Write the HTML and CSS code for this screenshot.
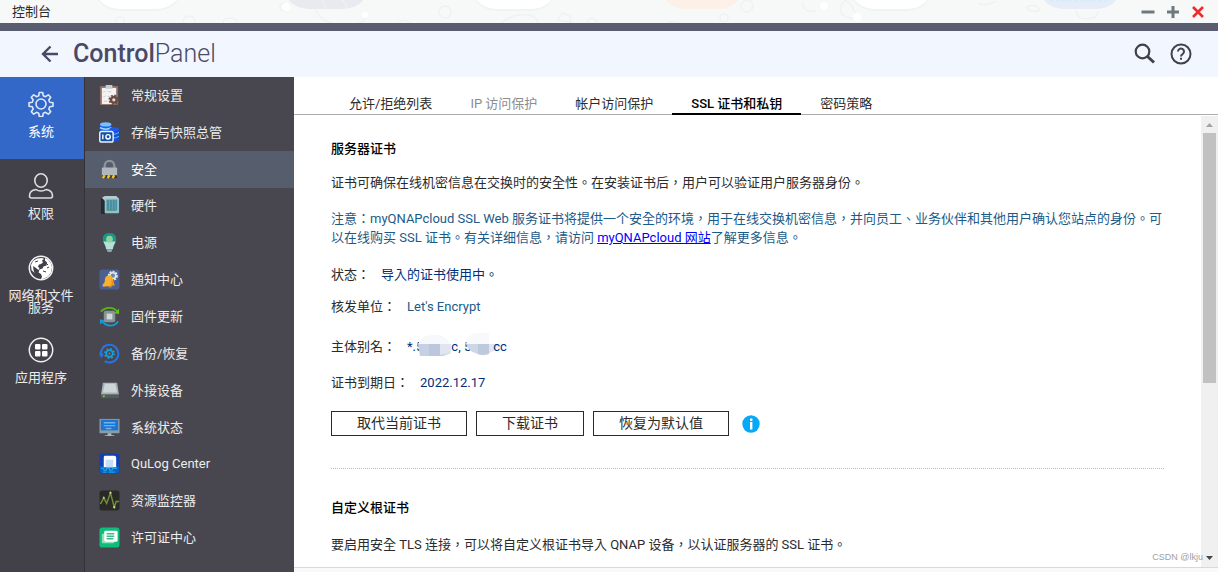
FILE: index.html
```
<!DOCTYPE html>
<html lang="zh-TW">
<head>
<meta charset="utf-8">
<title>控制台</title>
<link rel="stylesheet" href="styles.css">
</head>
<body>
<header class="titlebar">
  <svg class="wallpaper" width="1218" height="23" viewBox="0 0 1218 23" aria-hidden="true">
    <g fill="none" stroke="#f0f2f1" stroke-width="1.5">
      <path d="M24 12q6 10 17 3"/><circle cx="120" cy="21" r="4"/><circle cx="189" cy="22" r="6"/><ellipse cx="230" cy="22" rx="7" ry="4"/><circle cx="284" cy="7" r="4"/>
      <path d="M315 9q6 14 22 15q25 2 29-6M398 27q2-12 14-3M500 24q14-12 28-9q10 1 10 10M666 24q2-4 14-1"/>
      <circle cx="445" cy="12" r="6"/><path d="M558 20l4-7 8 3 1 6z"/><circle cx="592" cy="22" r="4"/><circle cx="747" cy="6" r="6"/><path d="M802 3q2 10 14 8M841 5q4-8 10 0l8 13q-12 2-18-5z"/>
      <path d="M978 3q8 4 18-2M1026 7q10-4 14 3-8 4-14-3M1076 10q0 8 10 9 12 0 12-8M1170 20q4-5 9 1"/><circle cx="724" cy="18" r="4"/>
    </g>
    <g fill="#f1f3f2">
      <rect x="96" y="-28" width="84" height="39" rx="24"/><rect x="473" y="-28" width="82" height="39" rx="24"/><rect x="851" y="-28" width="80" height="39" rx="24"/>
    </g>
    <g fill="#fff">
      <rect x="96" y="-30" width="84" height="39" rx="24"/><rect x="473" y="-30" width="82" height="39" rx="24"/><rect x="851" y="-30" width="80" height="39" rx="24"/>
      <circle cx="365" cy="15" r="3"/><circle cx="286" cy="7" r="4"/><circle cx="824" cy="6" r="4"/><circle cx="857" cy="17" r="4"/>
    </g>
    <rect x="285" y="-30" width="82" height="39" rx="24" fill="#e9eaef"/>
    <path d="M322 0q4 6 3 9M342 0q6 5 4 9" stroke="#f4f5f8" fill="none"/>
    <rect x="662" y="-30" width="80" height="39" rx="24" fill="#fdf0e6"/>
    <rect x="1040" y="-30" width="80" height="39" rx="24" fill="#e6edf8"/>
    <path d="M1050 1h58" stroke="#d2effb" stroke-width="2" stroke-dasharray="4 2"/>
  </svg>
  <h1 class="window-title">控制台</h1>
  <div class="window-controls">
    <button class="icon-button" aria-label="最小化"><svg width="14" height="14" viewBox="0 0 14 14"><path d="M.5 7h13" stroke="#70787f" stroke-width="3"/></svg></button>
    <button class="icon-button" aria-label="最大化"><svg width="14" height="14" viewBox="0 0 14 14"><path d="M1 7h12M7 1v12" stroke="#70787f" stroke-width="3"/></svg></button>
    <button class="icon-button" aria-label="关闭"><svg width="14" height="14" viewBox="0 0 14 14"><path d="M2 2l10 10M12 2L2 12" stroke="#ef2b2d" stroke-width="2.6"/></svg></button>
  </div>
</header>
<div class="app-header">
  <button class="icon-button" aria-label="返回"><svg width="18" height="18" viewBox="0 0 18 18" fill="none" stroke="#4a4a66" stroke-width="2.400"><path d="M17 9H2.500M9.500 1.500L2 9l7.500 7.500"/></svg></button>
  <h2 class="app-name"><b>Control</b><span>Panel</span></h2>
  <div class="header-tools">
    <button class="icon-button" aria-label="搜索"><svg width="22" height="22" viewBox="0 0 22 22" fill="none" stroke="#41414d"><circle cx="8.500" cy="8.500" r="6.800" stroke-width="2.200"/><path d="M13.500 13.500l6.500 6" stroke-width="3"/></svg></button>
    <button class="icon-button" aria-label="帮助"><svg width="22" height="22" viewBox="0 0 22 22" fill="none" stroke="#41414d" stroke-width="2"><circle cx="11" cy="11" r="9.500"/><path d="M8 8.600a3 3 0 1 1 4.700 2.400C11.500 11.900 11 12.300 11 13.500M11 14.800v2"/></svg></button>
  </div>
</div>
<div class="workspace">
  <nav class="rail">
    <a class="rail-item active" href="#system">
      <svg width="26" height="26" viewBox="0 0 26 26" fill="none" stroke="#dfe8f8" stroke-width="1.600" stroke-linejoin="round"><path d="M11.300 1.500h3.400l.6 3.300 2.200.9 2.800-1.900 2.400 2.400-1.900 2.800.9 2.200 3.300.6v3.400l-3.300.6-.9 2.200 1.900 2.800-2.400 2.400-2.800-1.900-2.200.9-.6 3.300h-3.400l-.6-3.300-2.200-.9-2.800 1.900-2.400-2.400 1.900-2.800-.9-2.200-3.300-.6v-3.400l3.300-.6.9-2.200-1.900-2.800 2.400-2.400 2.800 1.900 2.200-.9z"/><circle cx="13" cy="13" r="5"/></svg>
      <span>系统</span></a>
    <a class="rail-item" href="#privilege">
      <svg width="26" height="26" viewBox="0 0 26 26" fill="none" stroke="#ddd" stroke-width="1.600"><ellipse cx="13" cy="7.500" rx="6.200" ry="6.700"/><path d="M8 16.500C4 17 1.500 19.500 1.500 23q0 2 2 2h19q2 0 2-2c0-3.500-2.500-6-6.500-6.500-2.500 2-7.500 2-10 0z"/></svg>
      <span>权限</span></a>
    <a class="rail-item" href="#network">
      <svg width="26" height="26" viewBox="0 0 26 26"><circle cx="13" cy="13" r="11.700" fill="none" stroke="#f2f2f2" stroke-width="1.500"/><path fill="#fff" d="M5 6l4-2.500 5-.5 2 1-2 1.500 1 2-2 1.500-2 .5-1 2 1.500 2-1 1.500-2.500-2L5 11l.5 4 1 3-3-3L3 10zM17 3l3 1.500 3 4 1 4-1 5-3 4-4 2-3 1 1-3-1-2.500-2.500-1.500 1-3 3-1 1-2 3-1 .5-3-2-2z"/><path d="M7 7l3-1M18 8l2 2M15 16l3 1M19 13l2-1" stroke="#42414a" fill="none"/></svg>
      <span>网络和文件服务</span></a>
    <a class="rail-item" href="#apps">
      <svg width="26" height="26" viewBox="0 0 26 26" fill="#fff"><circle cx="13" cy="13" r="11.700" fill="none" stroke="#eee" stroke-width="1.500"/><rect x="7" y="7" width="5.500" height="5.500" rx="1"/><rect x="14" y="7" width="5.500" height="5.500" rx="1"/><rect x="7" y="14" width="5.500" height="5.500" rx="1"/><rect x="14" y="14" width="5.500" height="5.500" rx="1"/></svg>
      <span>应用程序</span></a>
  </nav>
  <nav class="submenu">
    <div class="submenu-list">
    <a class="menu-item" href="#general"><svg viewBox="0 0 22 22"><rect x="1" y="1" width="19" height="20" rx="1" fill="#8e6f66"/><path fill="#f4f3f1" d="M3 3h15v17H3z"/><path fill="#c5ced3" d="M7 0h7v4H7z"/><path d="M4 7l1 1 2-2M4 12l1 1 2-2M9 7h4M9 12h3M5 17h4" stroke="#ccc" fill="none"/><circle cx="15.500" cy="15.500" r="3" fill="#dedede" stroke="#6a4a42" stroke-width="2.600"/><circle cx="15.500" cy="15.500" r="4.800" fill="none" stroke="#6a4a42" stroke-width="1.500" stroke-dasharray="2 1.770"/></svg>常规设置</a>
    <a class="menu-item" href="#storage"><svg viewBox="0 0 22 22"><path fill="#1c63ea" d="M1 2h12v10H1z"/><ellipse cx="7" cy="2.500" rx="6" ry="2.300" fill="#79c0fb"/><path d="M1 6q6 3 12 0" stroke="#a6dbff" stroke-width="1.500" fill="none"/><path fill="#1552d4" d="M11 8h10v11q-5 3-10 0z"/><ellipse cx="16" cy="7.500" rx="5" ry="2" fill="#2458e0"/><path d="M12 12q5 2 9-1M13 16q4 2 8-1" stroke="#6fb4fa" fill="none"/><rect x=".8" y="10" width="14" height="11" rx="2" fill="#1451a5" stroke="#eaf4ff" stroke-width="1.500"/><circle cx="9.500" cy="15.500" r="2.300" fill="none" stroke="#fff" stroke-width="1.500"/><path d="M4 13v5" stroke="#fff" stroke-width="1.500"/></svg>存储与快照总管</a>
    <a class="menu-item selected" href="#security" aria-current="page"><svg viewBox="0 0 22 22"><path d="M6 11V7a5 5 0 0 1 10 0v4" fill="none" stroke="#8b9298" stroke-width="2.500"/><rect x="3" y="9" width="16" height="11" rx="1" fill="#b0b7bd"/><path fill="#333" d="M3 17h16v3H3z"/><path d="M4 20l2-3M9 20l2-3M14 20l2-3" stroke="#f8c51e" stroke-width="2.500"/></svg>安全</a>
    <a class="menu-item" href="#hardware"><svg viewBox="0 0 22 22"><path fill="#252b2e" d="M2 4l4-3v19H2z"/><path fill="#b8cbd0" d="M3 3l3-2h12l3 3v2H6z"/><rect x="6" y="4" width="15" height="15" rx="1" fill="#8cc3d0"/><path fill="#4a8ea2" d="M8 5h11v11H8z"/><path d="M11 5v11M14 5v11M17 5v11" stroke="#66a4b4"/><path d="M8 16h10" stroke="#5d8f62"/></svg>硬件</a>
    <a class="menu-item" href="#power"><svg viewBox="0 0 22 22"><path fill="#159a88" d="M11 1c-5 0-7 3-7 6 0 4 3 5 3.500 10h7C15 12 18 11 18 7c0-3-2-6-7-6z"/><path fill="#b4dfda" d="M4.500 10h13c-1 3-2.500 4-3 8h-7C7 14 5.500 13 4.500 10z"/><circle cx="11" cy="7.500" r="3.500" fill="#8fd29b"/><path fill="#9ca2a4" d="M8 18h6l-1 3H9z"/></svg>电源</a>
    <a class="menu-item" href="#notification"><svg viewBox="0 0 22 22"><rect x=".5" y=".5" width="21" height="21" rx="3" fill="#4b6090"/><circle cx="14.500" cy="7" r="4" fill="none" stroke="#e1e7ef" stroke-width="2.500" stroke-dasharray="2 1"/><circle cx="14.500" cy="7" r="3" fill="#7286a4" stroke="#e1e7ef" stroke-width="1.500"/><path fill="#fbb02d" d="M8 7.500Q11 5 14 8.500l1.500 6 1 2.500-12 1.500-1-1.500 2.500-3.500.3-3.500Q6.500 8 8 7.500z"/><path fill="#f08d19" d="M9 18h5q-2 3-5 0zM13 10l3 6.500-3 .5z"/></svg>通知中心</a>
    <a class="menu-item" href="#firmware"><svg viewBox="0 0 22 22"><path d="M2 6Q6 1.500 12 2q5 .5 8 5" fill="none" stroke="#55b90a" stroke-width="2"/><path fill="#66c60e" d="M16 7.500l5 1V3z"/><path d="M20 16q-3 5-9 4.500-5-.5-8-5" fill="none" stroke="#159bd9" stroke-width="2"/><path fill="#159bd9" d="M6 15l-5-1v5.500z"/><rect x="5" y="5" width="12" height="12" rx="2" fill="#879498"/><rect x="8" y="8" width="6" height="6" fill="#d0d9dc"/></svg>固件更新</a>
    <a class="menu-item" href="#backup"><svg viewBox="0 0 22 22" fill="none"><path d="M5 4A9.300 9.300 0 1 1 6 19" stroke="#2674e8" stroke-width="2.200"/><path d="M2 14Q1 8 6 3" stroke="#2674e8" stroke-width="2.200"/><path fill="#2674e8" d="M0 11h5l-2 5z"/><circle cx="11" cy="11" r="3.500" stroke="#16a0df" stroke-width="1.800"/><circle cx="11" cy="11" r="5" stroke="#16a0df" stroke-width="1.500" stroke-dasharray="2 1.920"/><circle cx="11" cy="11" r="1" fill="#16a0df"/></svg>备份/恢复</a>
    <a class="menu-item" href="#external"><svg viewBox="0 0 22 22"><path fill="#a7b0b5" d="M4 3h15l2 13H2z"/><path fill="#cdd5d8" d="M6 4h11l2 9H4z"/><path fill="#555c5e" d="M2 15h19v4H2z"/><path fill="#79c82a" d="M4 16h2v2H4z"/></svg>外接设备</a>
    <a class="menu-item" href="#status"><svg viewBox="0 0 22 22"><rect x=".5" y="2" width="21" height="15" fill="#879da9"/><path fill="#1c75d2" d="M2 3h18v11H2z"/><path d="M5 6h12M5 9h12M7 12h6" stroke="#6fb1f0" stroke-width="1.500"/><path fill="#aab7be" d="M9 17h4v2h3v1H6v-1h3z"/></svg>系统状态</a>
    <a class="menu-item" href="#qulog"><svg viewBox="0 0 22 22"><rect x=".5" y=".5" width="21" height="21" rx="3" fill="#123fb4"/><path fill="#0a5fc4" d="M1 14h20v5q0 2-2 2H3q-2 0-2-2z"/><path fill="#fff" d="M6 3h10q2 0 2 2v10H5V5q0-2 1-2z"/><path fill="#c6ddf7" d="M7 7h8v8H7z"/><path d="M2 16h3v2h3v-2h3v2h3v-2h5M4 20h4M10 20h7" stroke="#22b5ea" fill="none"/></svg>QuLog Center</a>
    <a class="menu-item" href="#resource"><svg viewBox="0 0 22 22"><rect x=".5" y=".5" width="21" height="21" rx="3" fill="#2b2927"/><path d="M1 14h1l3-6 3 6 4-11 4 15 2-6h3" fill="none" stroke="#718f38" stroke-width="1.500"/><g fill="#c7dc92"><circle cx="5" cy="8" r="1"/><circle cx="12" cy="3" r="1.200"/><circle cx="16" cy="18" r="1.200"/></g></svg>资源监控器</a>
    <a class="menu-item" href="#license"><svg viewBox="0 0 22 22"><rect x=".5" y=".5" width="21" height="21" rx="3" fill="#0dbd78"/><rect x="3" y="7" width="13" height="10" rx="1" fill="#8be0bd"/><rect x="5.500" y="4" width="14" height="11.500" rx="1.500" fill="#fff"/><path d="M8 7h8M8 9.700h8M8 12.400h7" stroke="#3dbb8b" stroke-width="1.500"/></svg>许可证中心</a>
    </div>
  </nav>
  <main class="content">
    <div class="tabs" role="tablist">
      <button class="tab" role="tab">允许/拒绝列表</button>
      <button class="tab" role="tab" disabled>IP 访问保护</button>
      <button class="tab" role="tab">帐户访问保护</button>
      <button class="tab current" role="tab" aria-selected="true">SSL 证书和私钥</button>
      <button class="tab" role="tab">密码策略</button>
    </div>
    <div class="scroll-area">
      <div class="panel">
        <section class="certificate">
          <h3>服务器证书</h3>
          <p class="intro">证书可确保在线机密信息在交换时的安全性。在安装证书后，用户可以验证用户服务器身份。</p>
          <p class="note">注意：myQNAPcloud SSL Web 服务证书将提供一个安全的环境，用于在线交换机密信息，并向员工、业务伙伴和其他用户确认您站点的身份。可以在线购买 SSL 证书。有关详细信息，请访问 <a href="#myqnapcloud">myQNAPcloud 网站</a>了解更多信息。</p>
          <dl class="details">
            <div class="field status"><dt>状态：</dt><dd>导入的证书使用中。</dd></div>
            <div class="field issuer"><dt>核发单位：</dt><dd>Let's Encrypt</dd></div>
            <div class="field alias"><dt>主体别名：</dt><dd>*.5<svg class="mask" width="34" height="24" viewBox="0 0 34 24"><path fill="#f6f8fb" d="M1 11Q4 2 17 2t16 9z"/><path fill="#c6d0e2" d="M1 11h32l1 9-8 3H3z"/><path fill="#dfe6ef" d="M23 11h11v9l-11 2z"/><path fill="#bcc7dd" d="M12 11h11v12H12z"/></svg>c, 5<svg class="mask mask-end" width="34" height="24" viewBox="0 0 34 24"><path fill="#f7f9fb" d="M1 11Q3 0 12 0h12v11z"/><path fill="#ced7e6" d="M1 11h32q-3 9-17 11Q3 19 1 11z"/><path fill="#bec9de" d="M13 11h11v10q-6 2-11 0z"/><path fill="#e0e7ef" d="M24 11h9q-2 7-9 9z"/></svg>cc</dd></div>
            <div class="field expiry"><dt>证书到期日：</dt><dd>2022.12.17</dd></div>
          </dl>
          <div class="actions">
            <button class="action">取代当前证书</button>
            <button class="action">下载证书</button>
            <button class="action">恢复为默认值</button>
            <svg class="info" width="18" height="18" viewBox="0 0 18 18" role="img" aria-label="信息"><circle cx="9" cy="9" r="8.700" fill="#05a9f7"/><path fill="#fff" d="M8 3.500h2.400V6H8zM8 7h2.400v7.500H8z"/></svg>
          </div>
        </section>
        <section class="root-certificate">
          <h3>自定义根证书</h3>
          <p>要启用安全 TLS 连接，可以将自定义根证书导入 QNAP 设备，以认证服务器的 SSL 证书。</p>
        </section>
      </div>
      <div class="scrollbar" aria-hidden="true">
        <svg width="17" height="17" viewBox="0 0 17 17"><path fill="#a3a3a3" d="M5 11l3.500-4 3.500 4z"/></svg>
        <div class="track"><div class="thumb"></div></div>
        <svg width="17" height="17" viewBox="0 0 17 17"><path fill="#454545" d="M5 6h7l-3.500 4z"/></svg>
      </div>
      <span class="watermark">CSDN @lkju</span>
    </div>
    <div class="bottom-strip"></div>
  </main>
</div>
</body>
</html>
```
FILE: styles.css
```
* { box-sizing: border-box; }

body {
  margin: 0;
  height: 100vh;
  display: flex;
  flex-direction: column;
  overflow: hidden;
  background: #fff;
  color: #2b2b2b;
  font: 13px/19px Roboto, "Noto Sans CJK TC", sans-serif;
}

h1, h2, h3, p, dl, dd { margin: 0; }
button { font-family: inherit; }
svg { flex: none; }

.icon-button {
  display: flex;
  padding: 0;
  border: 0;
  background: none;
}

.titlebar {
  position: relative;
  display: flex;
  align-items: center;
  justify-content: space-between;
  padding: 0 13px 0 12px;
  background: #f7f9f8;
  overflow: hidden;
}

.wallpaper {
  position: absolute;
  top: 0;
  left: 0;
}

.window-title {
  position: relative;
  font-size: 13px;
  font-weight: 400;
  line-height: 23px;
}

.window-controls {
  position: relative;
  display: flex;
  gap: 11px;
}

.app-header {
  display: flex;
  align-items: center;
  padding: 0 26px 0 41px;
  border-top: 8px solid #5a5c70;
  background: #f2f6ff;
}

.app-name {
  margin-left: 14px;
  color: #4a4a66;
  font-size: 25px;
  font-weight: 300;
  line-height: 46px;
}

.app-name b { font-weight: 500; }

.header-tools {
  display: flex;
  gap: 14px;
  margin-left: auto;
}

.workspace {
  flex: 1;
  min-height: 0;
  display: flex;
}

.rail {
  flex: none;
  width: 85px;
  border-right: 1px solid #333239;
  background: #42414a;
}

.rail-item {
  display: flex;
  flex-direction: column;
  align-items: center;
  gap: 9px;
  height: 82px;
  padding: 14px 10px 0 8px;
  color: #ececec;
  line-height: 12px;
  text-align: center;
  text-decoration: none;
}

.rail-item.active {
  background: #3368c9;
  color: #fff;
}

.submenu {
  flex: none;
  width: 209px;
  background: #48474f;
}

.submenu-list {
  display: flex;
  flex-direction: column;
  height: 479px;
}

.menu-item {
  flex: 1;
  display: flex;
  align-items: center;
  gap: 11px;
  padding-left: 14px;
  color: #ececec;
  text-decoration: none;
}

.menu-item svg {
  width: 21px;
  height: 21px;
}

.menu-item.selected {
  background: #565d6c;
  color: #fff;
}

.content {
  flex: 1;
  min-width: 0;
  display: flex;
  flex-direction: column;
}

.tabs {
  display: flex;
  padding: 18px 36px 0;
  box-shadow: inset 0 -1px #adadad;
}

.tab {
  padding: 0 19px;
  border: 0;
  border-bottom: 2px solid transparent;
  background: none;
  color: #2b2b2b;
  font-size: 13px;
  line-height: 18px;
}

.tab:disabled { color: #8c8c8c; }

.tab.current {
  border-color: #000;
  color: #000;
  font-weight: 500;
}

.scroll-area {
  position: relative;
  flex: 1;
  min-height: 0;
  display: flex;
  padding-top: 1px;
}

.panel {
  flex: 1;
  min-width: 0;
  padding: 23px 37px 0;
  overflow: hidden;
}

h3 {
  color: #000;
  font-size: 13px;
  font-weight: 500;
}

.certificate {
  padding-bottom: 32px;
  border-bottom: 1px dotted #bbb;
}

.intro { margin-top: 15px; }

.note {
  margin-top: 17px;
  color: #1b5b88;
}

.note a { color: #00f; }

.field {
  display: flex;
  gap: 11px;
}

.field dd {
  display: flex;
  align-items: center;
  color: #002f7c;
  white-space: pre;
}

.status { margin-top: 18px; }
.issuer { margin-top: 13px; }
.field.issuer dd { color: #1b5b88; }
.alias { margin-top: 21px; }
.expiry { margin-top: 17px; }

.mask { margin: -4px 0 -1px -6px; }
.mask-end { margin-right: -6px; }

.actions {
  display: flex;
  align-items: center;
  gap: 9px;
  margin-top: 19px;
}

.action {
  padding: 0 25px;
  border: 1px solid #2b2b2b;
  background: #fff;
  color: #2b2b2b;
  font-size: 14px;
  line-height: 23px;
}

.info { margin-left: 4px; }

.root-certificate { padding-top: 29px; }
.root-certificate p { margin-top: 18px; }

.scrollbar {
  flex: none;
  display: flex;
  flex-direction: column;
  background: #f0f0f0;
}

.track {
  flex: 1;
  padding: 0 2px;
}

.thumb {
  height: 60%;
  background: #c1c1c1;
}

.watermark {
  position: absolute;
  right: 15px;
  bottom: 0;
  color: #a0a0a0;
  font: 9px/20px "Liberation Sans", sans-serif;
}

.bottom-strip {
  height: 5px;
  border-top: 1px solid #d9d9d9;
  background: #f9f9f9;
}
```
